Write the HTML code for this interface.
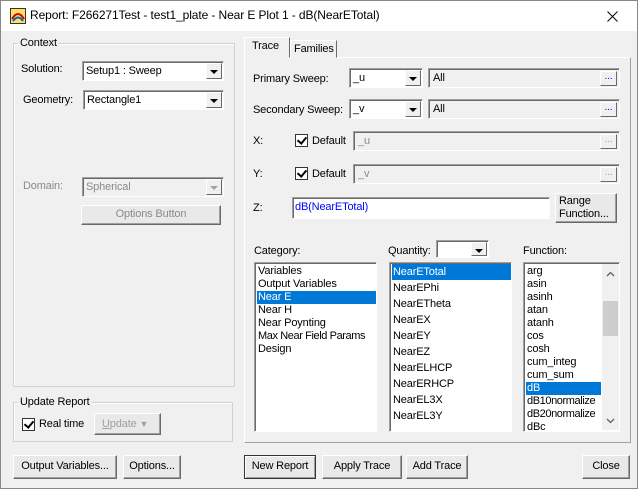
<!DOCTYPE html><html><head><style>
*{box-sizing:border-box;margin:0;padding:0}
body{width:638px;height:489px;background:#f0f0f0;font-family:"Liberation Sans",sans-serif;font-size:11px;letter-spacing:-0.15px;color:#000;position:relative;overflow:hidden}
.a{position:absolute;white-space:nowrap}
#win{position:absolute;left:0;top:0;width:638px;height:489px;border:1px solid #888}
.grp{position:absolute;border:1px solid #d0d0d0;box-shadow:inset 1px 1px 0 #fff}
.gl{position:absolute;background:#f0f0f0;padding:0 2px;line-height:12px}
.combo{position:absolute;background:#fff;border:1px solid;border-color:#a0a0a0 #fff #fff #a0a0a0;box-shadow:inset 1px 1px 0 #696969;padding:3px 0 0 3px;line-height:13px}
.combo .dd{position:absolute;right:1px;top:1px;bottom:1px;width:16px;background:#f0f0f0;border:1px solid;border-color:#fff #696969 #696969 #fff}
.combo .dd:after{content:"";position:absolute;left:3px;top:6px;border-left:4px solid transparent;border-right:4px solid transparent;border-top:4px solid #000}
.combo.dis{background:#f0f0f0;color:#8a8a8a}
.combo.dis .dd:after{border-top-color:#a0a0a0}
.btn{position:absolute;background:#e9e9e9;border:1px solid;border-color:#fff #696969 #696969 #fff;box-shadow:inset -1px -1px 0 #a0a0a0;text-align:center;line-height:20px}
.fld{position:absolute;background:#f0f0f0;border:1px solid;border-color:#a0a0a0 #fff #fff #a0a0a0;box-shadow:inset 1px 1px 0 #696969;padding:2px 0 0 4px;line-height:14px}
.dots{position:absolute;right:2px;top:2px;width:17px;height:15px;border:1px solid;border-color:#fff #696969 #696969 #fff;font-size:10px;line-height:10px;text-align:center;color:#00f;background:#f0f0f0}
.cb{position:absolute;width:13px;height:13px;background:#fff;border:1px solid #333}
.cb:after{content:"";position:absolute;left:3px;top:0px;width:4px;height:7px;border:solid #000;border-width:0 2px 2px 0;transform:rotate(40deg)}
.lb{position:absolute;background:#fff;border:1px solid;border-color:#a0a0a0 #fff #fff #a0a0a0;box-shadow:inset 1px 1px 0 #696969;overflow:hidden}
.it{position:absolute;left:2px;white-space:nowrap;padding-left:1px;line-height:13px}
.sel{background:#0078d7;color:#fff}
</style></head><body>
<div id="win"></div>
<div class="a" style="left:1px;top:1px;width:636px;height:30px;background:#fff"></div>
<svg class="a" style="left:10px;top:8px" width="16" height="16"><rect x="0.5" y="0.5" width="15" height="15" fill="#ffe060" stroke="#333"/><path d="M2 11 Q8 1 14 11" stroke="#d00" stroke-width="2" fill="none"/><path d="M3 13 Q8 6 13 13" stroke="#06c" stroke-width="2" fill="none"/></svg>
<div class="a" style="left:30px;top:8px;font-size:12px;letter-spacing:-0.1px">Report: F266271Test - test1_plate - Near E Plot 1 - dB(NearETotal)</div>
<svg class="a" style="left:607px;top:11px" width="11" height="11"><path d="M0.5 0.5L10.5 10.5M10.5 0.5L0.5 10.5" stroke="#000" stroke-width="1"/></svg>

<div class="grp" style="left:13px;top:43px;width:222px;height:344px"></div>
<div class="gl" style="left:18px;top:37px">Context</div>
<div class="a" style="left:21px;top:63px">Solution:</div>
<div class="combo" style="left:82px;top:61px;width:142px;height:20px">Setup1 : Sweep<div class="dd"></div></div>
<div class="a" style="left:23px;top:94px">Geometry:</div>
<div class="combo" style="left:83px;top:90px;width:141px;height:20px">Rectangle1<div class="dd"></div></div>
<div class="a" style="left:23px;top:180px;color:#8a8a8a">Domain:</div>
<div class="combo dis" style="left:82px;top:177px;width:142px;height:20px">Spherical<div class="dd"></div></div>
<div class="btn" style="left:81px;top:205px;width:140px;height:20px;line-height:17px;color:#8a8a8a">Options Button</div>

<div class="grp" style="left:13px;top:402px;width:220px;height:40px"></div>
<div class="gl" style="left:18px;top:396px">Update Report</div>
<div class="cb" style="left:22px;top:418px"></div>
<div class="a" style="left:39px;top:418px">Real time</div>
<div class="btn" style="left:94px;top:413px;width:67px;height:22px;color:#a0a0a0;text-align:left;padding-left:7px"><u>U</u>pdate <span style="font-size:9px">▼</span></div>

<div class="btn" style="left:13px;top:455px;width:104px;height:24px;line-height:21px">Output Variables...</div>
<div class="btn" style="left:123px;top:455px;width:58px;height:24px;line-height:21px">Options...</div>

<div class="a" style="left:244px;top:57px;width:387px;height:386px;border:1px solid;border-color:#fff #a0a0a0 #a0a0a0 #fff"></div>
<div class="a" style="left:290px;top:40px;width:47px;height:18px;border:1px solid;border-color:#fff #696969 #f0f0f0 #fff;padding:2px 0 0 3px;line-height:13px">Families</div>
<div class="a" style="left:244px;top:37px;width:46px;height:21px;border:1px solid;border-color:#fff #696969 #f0f0f0 #fff;background:#f0f0f0;padding:2px 0 0 7px;line-height:13px">Trace</div>

<div class="a" style="left:253px;top:73px">Primary Sweep:</div>
<div class="combo" style="left:349px;top:68px;width:74px;height:20px">_u<div class="dd"></div></div>
<div class="fld" style="left:428px;top:68px;width:192px;height:20px">All<div class="dots">...</div></div>
<div class="a" style="left:253px;top:104px">Secondary Sweep:</div>
<div class="combo" style="left:349px;top:99px;width:74px;height:20px">_v<div class="dd"></div></div>
<div class="fld" style="left:428px;top:99px;width:192px;height:20px">All<div class="dots">...</div></div>

<div class="a" style="left:253px;top:135px">X:</div>
<div class="cb" style="left:295px;top:134px"></div>
<div class="a" style="left:312px;top:135px">Default</div>
<div class="fld" style="left:353px;top:131px;width:267px;height:20px;color:#8a8a8a">_u<div class="dots" style="color:#a0a0a0">...</div></div>
<div class="a" style="left:253px;top:168px">Y:</div>
<div class="cb" style="left:295px;top:167px"></div>
<div class="a" style="left:312px;top:168px">Default</div>
<div class="fld" style="left:353px;top:164px;width:267px;height:20px;color:#8a8a8a">_v<div class="dots" style="color:#a0a0a0">...</div></div>

<div class="a" style="left:253px;top:202px">Z:</div>
<div class="fld" style="left:292px;top:197px;width:258px;height:22px;background:#fff;color:#00f;padding-left:2px">dB(NearETotal)</div>
<div class="btn" style="left:555px;top:193px;width:62px;height:30px;line-height:13px;text-align:left;padding:1px 0 0 3px">Range<br>Function...</div>

<div class="a" style="left:254px;top:245px">Category:</div>
<div class="a" style="left:388px;top:245px">Quantity:</div>
<div class="combo" style="left:436px;top:240px;width:53px;height:18px"><div class="dd"></div></div>
<div class="a" style="left:523px;top:245px">Function:</div>

<div class="lb" style="left:254px;top:262px;width:123px;height:170px">
<div class="it" style="top:2px">Variables</div>
<div class="it" style="top:15px">Output Variables</div>
<div class="it sel" style="top:28px;width:119px">Near E</div>
<div class="it" style="top:41px">Near H</div>
<div class="it" style="top:54px">Near Poynting</div>
<div class="it" style="top:67px;letter-spacing:-0.4px">Max Near Field Params</div>
<div class="it" style="top:80px">Design</div>
</div>
<div class="lb" style="left:389px;top:262px;width:123px;height:170px">
<div class="it sel" style="top:1px;width:119px;height:16px;line-height:16px">NearETotal</div>
<div class="it" style="top:17px;line-height:16px">NearEPhi</div>
<div class="it" style="top:33px;line-height:16px">NearETheta</div>
<div class="it" style="top:49px;line-height:16px">NearEX</div>
<div class="it" style="top:65px;line-height:16px">NearEY</div>
<div class="it" style="top:81px;line-height:16px">NearEZ</div>
<div class="it" style="top:97px;line-height:16px">NearELHCP</div>
<div class="it" style="top:113px;line-height:16px">NearERHCP</div>
<div class="it" style="top:129px;line-height:16px">NearEL3X</div>
<div class="it" style="top:145px;line-height:16px">NearEL3Y</div>
</div>
<div class="lb" style="left:523px;top:262px;width:97px;height:170px">
<div class="it" style="top:2px">arg</div>
<div class="it" style="top:15px">asin</div>
<div class="it" style="top:28px">asinh</div>
<div class="it" style="top:41px">atan</div>
<div class="it" style="top:54px">atanh</div>
<div class="it" style="top:67px">cos</div>
<div class="it" style="top:80px">cosh</div>
<div class="it" style="top:93px">cum_integ</div>
<div class="it" style="top:106px">cum_sum</div>
<div class="it sel" style="top:119px;width:75px">dB</div>
<div class="it" style="top:132px;letter-spacing:-0.4px">dB10normalize</div>
<div class="it" style="top:145px;letter-spacing:-0.4px">dB20normalize</div>
<div class="it" style="top:158px">dBc</div>
<div class="a" style="left:78px;top:1px;width:17px;height:166px;background:#f0f0f0"></div>
<div class="a" style="left:79px;top:38px;width:15px;height:35px;background:#cdcdcd"></div>
<svg class="a" style="left:82px;top:8px" width="9" height="6"><path d="M1 5L4.5 1.5L8 5" stroke="#606060" fill="none" stroke-width="1.3"/></svg>
<svg class="a" style="left:82px;top:155px" width="9" height="6"><path d="M1 1L4.5 4.5L8 1" stroke="#606060" fill="none" stroke-width="1.3"/></svg>
</div>

<div class="btn" style="left:244px;top:455px;width:72px;height:24px;line-height:20px;border:1px solid #333;box-shadow:inset 1px 1px 0 #fff,inset -1px -1px 0 #a0a0a0">New Report</div>
<div class="btn" style="left:322px;top:455px;width:80px;height:24px;line-height:21px">Apply Trace</div>
<div class="btn" style="left:406px;top:455px;width:62px;height:24px;line-height:21px">Add Trace</div>
<div class="btn" style="left:582px;top:455px;width:48px;height:24px;line-height:21px">Close</div>
</body></html>
